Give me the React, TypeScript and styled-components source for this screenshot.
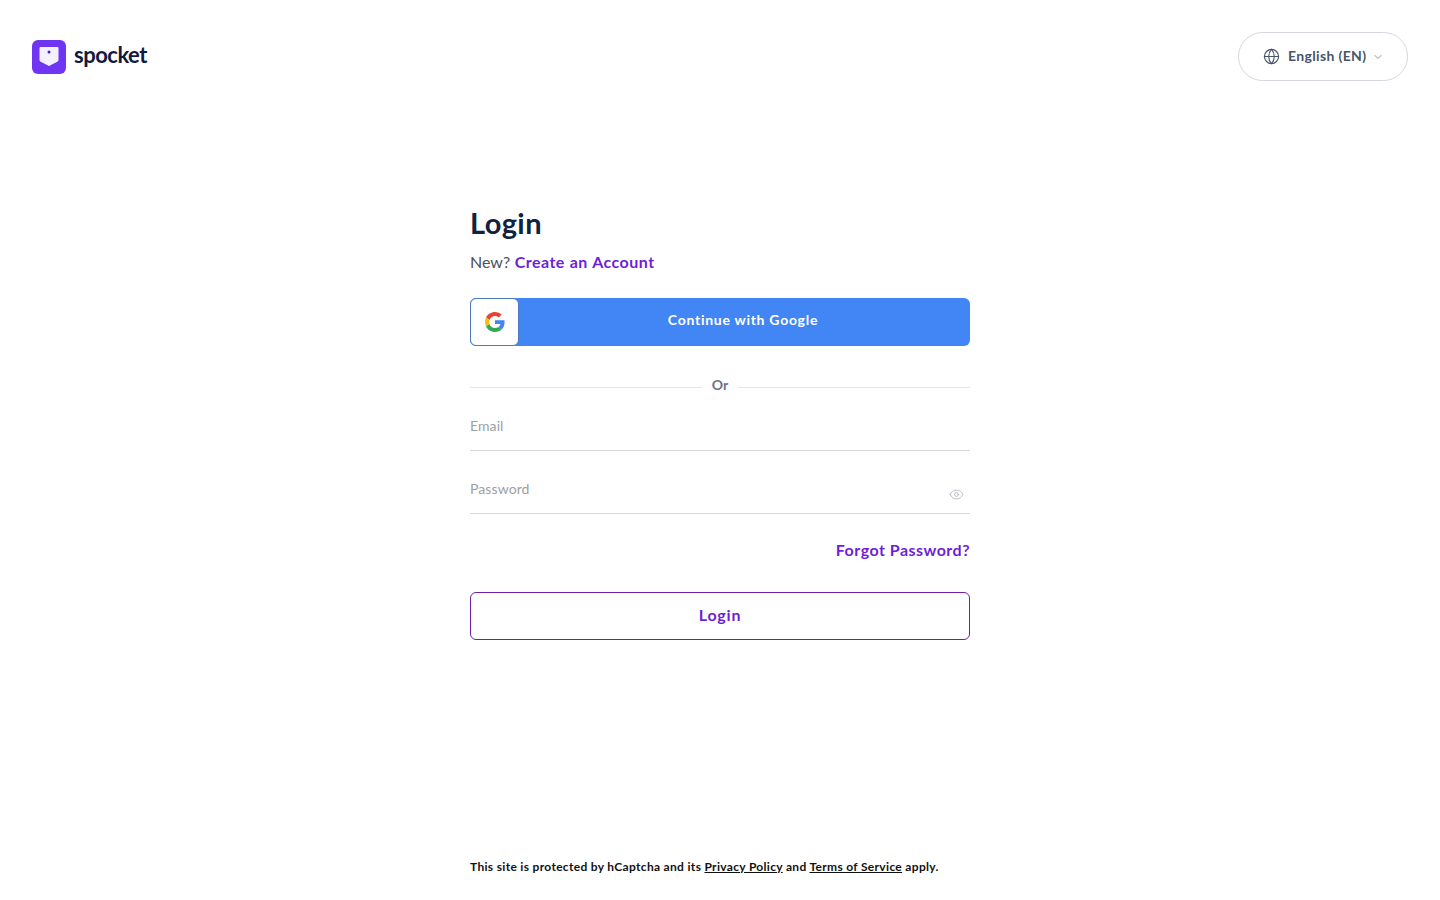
import styled, { createGlobalStyle } from "styled-components";
import { ChevronDown, Eye, Globe } from "lucide-react";

const GlobalStyle = createGlobalStyle`
  html, body {
    margin: 0;
    padding: 0;
    background: #fff;
    font-family: "Lato", "Open Sans", sans-serif;
  }
  * { box-sizing: border-box; }
`;

const Page = styled.div`
  height: 900px;
  display: flex;
  flex-direction: column;
  overflow: hidden;
`;

const Header = styled.header`
  display: flex;
  justify-content: space-between;
  align-items: center;
  padding: 32px 32px 0;
`;

const Brand = styled.div`
  display: flex;
  align-items: center;
  gap: 8px;
`;

const BrandName = styled.span`
  font-size: 22px;
  font-weight: 700;
  color: #14193f;
  letter-spacing: -0.5px;
  line-height: 30px;
  padding-bottom: 4px;
`;

const LangButton = styled.button`
  width: 170px;
  height: 49px;
  display: flex;
  align-items: center;
  gap: 8px;
  background: #fff;
  border: 1px solid #d3d7dd;
  border-radius: 25px;
  color: #4a5568;
  font-family: inherit;
  font-size: 14px;
  font-weight: 700;
  padding: 0 0 0 24px;

  svg:last-child { margin-left: -2px; }
`;

const LangLabel = styled.span`
  letter-spacing: 0.35px;
  margin-bottom: 3px;
`;

const Main = styled.main`
  width: 500px;
  margin: 0 auto;
  flex: 1;
  display: flex;
  flex-direction: column;
  padding-top: 124px;
`;

const Title = styled.h1`
  margin: 0;
  font-size: 29px;
  line-height: 36px;
  font-weight: 700;
  letter-spacing: 0.4px;
  color: #0f2240;
`;

const Subtitle = styled.p`
  margin: 9px 0 0;
  font-size: 16px;
  line-height: 24px;
  word-spacing: 0.5px;
  color: #4a4f5a;
`;

const PurpleLink = styled.a`
  color: #6d1fd6;
  font-weight: 700;
  letter-spacing: 0.48px;
  text-decoration: none;
`;

const GoogleButton = styled.button`
  margin-top: 24px;
  height: 48px;
  width: 100%;
  display: flex;
  align-items: stretch;
  padding: 0;
  border: none;
  border-radius: 6px;
  background: #4285f4;
  font-family: inherit;
`;

const GoogleIcon = styled.span`
  width: 49px;
  display: flex;
  align-items: center;
  justify-content: center;
  background: #fff;
  border: 1px solid #4a7ab8;
  border-radius: 6px;
`;

const GoogleLabel = styled.span`
  flex: 1;
  text-align: center;
  color: #fff;
  font-size: 14px;
  font-weight: 700;
  letter-spacing: 0.72px;
  line-height: 44px;
  padding-right: 3px;
`;

const Divider = styled.div`
  margin-top: 29px;
  display: flex;
  align-items: center;
  gap: 10px;
  color: #6b7280;
  font-size: 14px;
  font-weight: 700;
  line-height: 20px;

  &::before, &::after {
    content: "";
    flex: 1;
    height: 1px;
    background: #e2e4e8;
    margin-top: 4px;
  }
`;

const Field = styled.div<{ $gap: number }>`
  position: relative;
  margin-top: ${(p) => p.$gap}px;
  height: 38px;
  border-bottom: 1px solid #d5d7db;
`;

const Input = styled.input`
  width: 100%;
  height: 24px;
  border: none;
  outline: none;
  padding: 0;
  font-family: inherit;
  font-size: 14px;
  letter-spacing: 0.1px;
  background: transparent;
  color: #333;

  &::placeholder { color: #9a9fa8; opacity: 1; }
`;

const EyeIcon = styled.span`
  position: absolute;
  right: 6px;
  top: 11px;
  display: flex;
  color: #a4aab2;
`;

const ForgotRow = styled.div`
  margin-top: 23px;
  text-align: right;
  font-size: 16px;
  line-height: 26px;
`;

const LoginButton = styled.button`
  margin-top: 29px;
  height: 48px;
  width: 100%;
  border: 1px solid #6d1fa6;
  border-radius: 6px;
  background: #fff;
  color: #6d1fd6;
  font-family: inherit;
  font-size: 16px;
  font-weight: 700;
  letter-spacing: 0.8px;
  padding: 0 0 4px;
`;

const Notice = styled.p`
  margin: auto 0 24px;
  font-size: 12px;
  line-height: 18px;
  font-weight: 700;
  letter-spacing: 0.32px;
  color: #111;

  a { color: #111; text-decoration: underline; }
`;

const Logo = () => (
  <svg width="34" height="34" viewBox="0 0 34 34" aria-hidden="true">
    <rect width="34" height="34" rx="6" fill="#6f35f2" />
    <path
      d="M8.500 7h17a1 1 0 0 1 1 1v12a2 2 0 0 1-1.200 1.800L17 26l-8.300-4.200A2 2 0 0 1 7.500 20V8a1 1 0 0 1 1-1z"
      fill="#f4f0ff"
    />
    <circle cx="17" cy="12" r="1.500" fill="#4a1fb0" />
  </svg>
);

const GoogleMark = () => (
  <svg width="20" height="20" viewBox="0 0 48 48" aria-hidden="true">
    <path fill="#EA4335" d="M24 9.500c3.500 0 6.700 1.200 9.200 3.600l6.900-6.900C35.900 2.400 30.400 0 24 0 14.600 0 6.500 5.400 2.600 13.200l8 6.200C12.500 13.700 17.800 9.500 24 9.500z" />
    <path fill="#4285F4" d="M47 24.500c0-1.600-.1-3.100-.4-4.500H24v9h12.900c-.6 3-2.300 5.500-4.800 7.200l7.700 6C44.300 38 47 31.800 47 24.500z" />
    <path fill="#FBBC05" d="M10.600 28.600c-.5-1.400-.8-3-.8-4.600s.3-3.200.8-4.600l-8-6.200C.9 16.500 0 20.100 0 24s.9 7.500 2.600 10.800l8-6.200z" />
    <path fill="#34A853" d="M24 48c6.500 0 11.900-2.100 15.800-5.800l-7.700-6c-2.100 1.400-4.900 2.300-8.100 2.300-6.200 0-11.500-4.200-13.400-9.900l-8 6.200C6.500 42.600 14.600 48 24 48z" />
  </svg>
);

export default function App() {
  return (
    <Page>
      <GlobalStyle />
      <Header>
        <Brand>
          <Logo />
          <BrandName>spocket</BrandName>
        </Brand>
        <LangButton>
          <Globe size={17} strokeWidth={1.6} />
          <LangLabel>English (EN)</LangLabel>
          <ChevronDown size={12} color="#8a93a0" />
        </LangButton>
      </Header>
      <Main>
        <Title>Login</Title>
        <Subtitle>
          New? <PurpleLink href="#">Create an Account</PurpleLink>
        </Subtitle>
        <GoogleButton>
          <GoogleIcon>
            <GoogleMark />
          </GoogleIcon>
          <GoogleLabel>Continue with Google</GoogleLabel>
        </GoogleButton>
        <Divider>Or</Divider>
        <Field $gap={18}>
          <Input placeholder="Email" />
        </Field>
        <Field $gap={25}>
          <Input placeholder="Password" type="password" />
          <EyeIcon>
            <Eye size={15} strokeWidth={1.2} />
          </EyeIcon>
        </Field>
        <ForgotRow>
          <PurpleLink href="#">Forgot Password?</PurpleLink>
        </ForgotRow>
        <LoginButton>Login</LoginButton>
        <Notice>
          This site is protected by hCaptcha and its <a href="#">Privacy Policy</a> and{" "}
          <a href="#">Terms of Service</a> apply.
        </Notice>
      </Main>
    </Page>
  );
}
